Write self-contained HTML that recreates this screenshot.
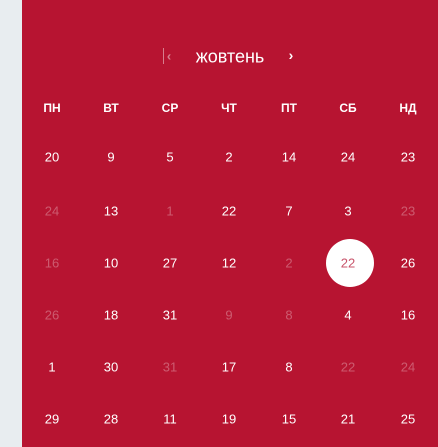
<!DOCTYPE html>
<html><head><meta charset="utf-8"><style>
body{margin:0;width:438px;height:447px;overflow:hidden;background:#e8edf0;font-family:"Liberation Sans",sans-serif;color:#fff;}
#c{position:absolute;left:22px;top:0;width:416px;height:447px;background:#b71431;}
.t{position:absolute;transform:translate(-50%,-50%);font-size:13px;white-space:nowrap;color:#fff;}
.w{font-weight:bold;font-size:12px;}
.d{color:rgba(255,255,255,0.3);}
.circ{position:absolute;left:326px;top:239px;width:48px;height:48px;border-radius:50%;background:#fff;}
</style></head><body>
<div id="c"></div>
<div class="circ"></div>
<div id="g"></div>
<script>
var cols=[52,111,170,229,289,348,408];
var rows=[157,211,263,315,367,419];
var data=[
["20","9","5","2","14","24","23"],
["~24","13","~1","22","7","3","~23"],
["~16","10","27","12","~2","*22","26"],
["~26","18","31","~9","~8","4","16"],
["1","30","~31","17","8","~22","~24"],
["29","28","11","19","15","21","25"]];
var h='';
var wd=["ПН","ВТ","СР","ЧТ","ПТ","СБ","НД"];
wd.forEach(function(w,i){h+='<div class="t w" style="left:'+cols[i]+'px;top:108px">'+w+'</div>';});
data.forEach(function(r,ri){r.forEach(function(v,ci){var cls='t',st='';
if(v[0]=='~'){cls+=' d';v=v.slice(1);}
if(v[0]=='*'){v=v.slice(1);st='color:#c8546b;';}
h+='<div class="'+cls+'" style="left:'+cols[ci]+'px;top:'+rows[ri]+'px;'+st+'">'+v+'</div>';});});
document.getElementById('g').innerHTML=h;
</script>
<div style="position:absolute;left:163px;top:48px;width:1px;height:16px;background:rgba(255,255,255,0.45)"></div>
<div class="t" style="left:169px;top:56px;font-size:13px;color:rgba(255,255,255,0.45);font-weight:bold">‹</div>
<div class="t" style="left:230px;top:57px;font-size:18px;">жовтень</div>
<div class="t" style="left:291px;top:55px;font-size:14px;font-weight:bold">›</div>
</body></html>
